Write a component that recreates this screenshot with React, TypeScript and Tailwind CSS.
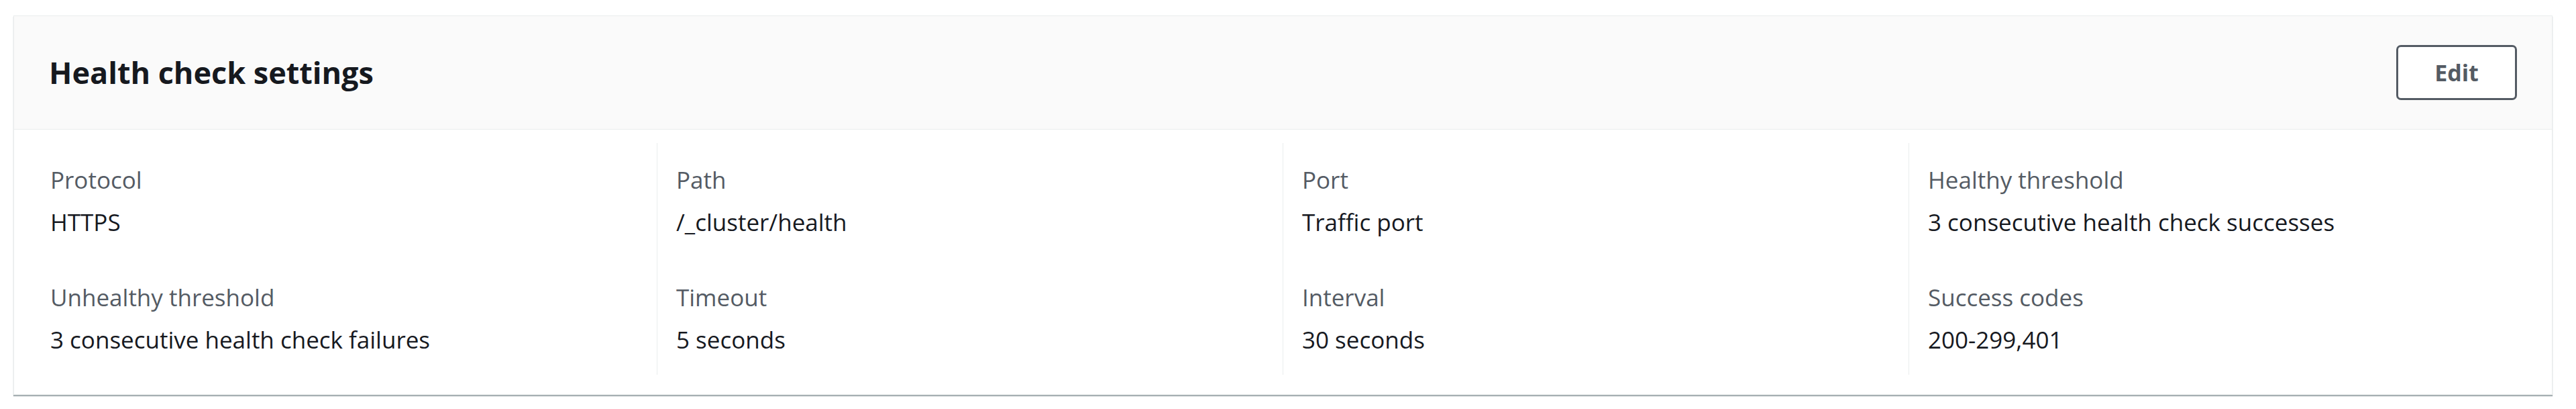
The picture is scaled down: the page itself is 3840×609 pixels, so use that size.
import React from 'react';

type Setting = {
  label: string;
  value: string;
};

// two settings per column, read top to bottom
const columns: Setting[][] = [
  [
    { label: 'Protocol', value: 'HTTPS' },
    { label: 'Unhealthy threshold', value: '3 consecutive health check failures' },
  ],
  [
    { label: 'Path', value: '/_cluster/health' },
    { label: 'Timeout', value: '5 seconds' },
  ],
  [
    { label: 'Port', value: 'Traffic port' },
    { label: 'Interval', value: '30 seconds' },
  ],
  [
    { label: 'Healthy threshold', value: '3 consecutive health check successes' },
    { label: 'Success codes', value: '200-299,401' },
  ],
];

const KeyValue: React.FC<Setting> = ({ label, value }) => {
  return (
    <div className="flex flex-col">
      <div className="text-[35px] leading-[59px] text-[#545b64]">{label}</div>
      <div className="mt-[4px] text-[35px] leading-[59px] text-[#16191f]">{value}</div>
    </div>
  );
};

const App: React.FC = () => {
  return (
    <div className="min-h-[609px] w-[3840px] bg-white pt-[23px] pl-[20px] pr-[35px] font-['Open_Sans',sans-serif]">
      <div className="border border-[#eaeded] bg-white shadow-[0_2px_1px_0_rgba(0,28,36,0.35)]">
        <header className="flex h-[169px] items-center justify-between border-b border-[#eaeded] bg-[#fafafa] px-[52px]">
          <h2 className="text-[45px] font-bold text-[#16191f]">Health check settings</h2>
          <button
            type="button"
            className="flex h-[82px] w-[180px] items-center justify-center rounded-[7px] border-[3px] border-[#545b64] bg-white text-[34px] font-bold text-[#545b64]"
          >
            Edit
          </button>
        </header>

        <div className="pt-[20px] pb-[29px] pl-[25px] pr-[26px]">
          <div className="grid grid-cols-4">
            {columns.map((col, i) => (
              <div
                key={i}
                className={`flex flex-col gap-[53px] border-l pt-[25px] pb-[23px] pl-[28px] ${
                  i === 0 ? 'border-transparent' : 'border-[#eaeded]'
                }`}
              >
                {col.map((item) => (
                  <KeyValue key={item.label} label={item.label} value={item.value} />
                ))}
              </div>
            ))}
          </div>
        </div>
      </div>
    </div>
  );
};

export default App;
